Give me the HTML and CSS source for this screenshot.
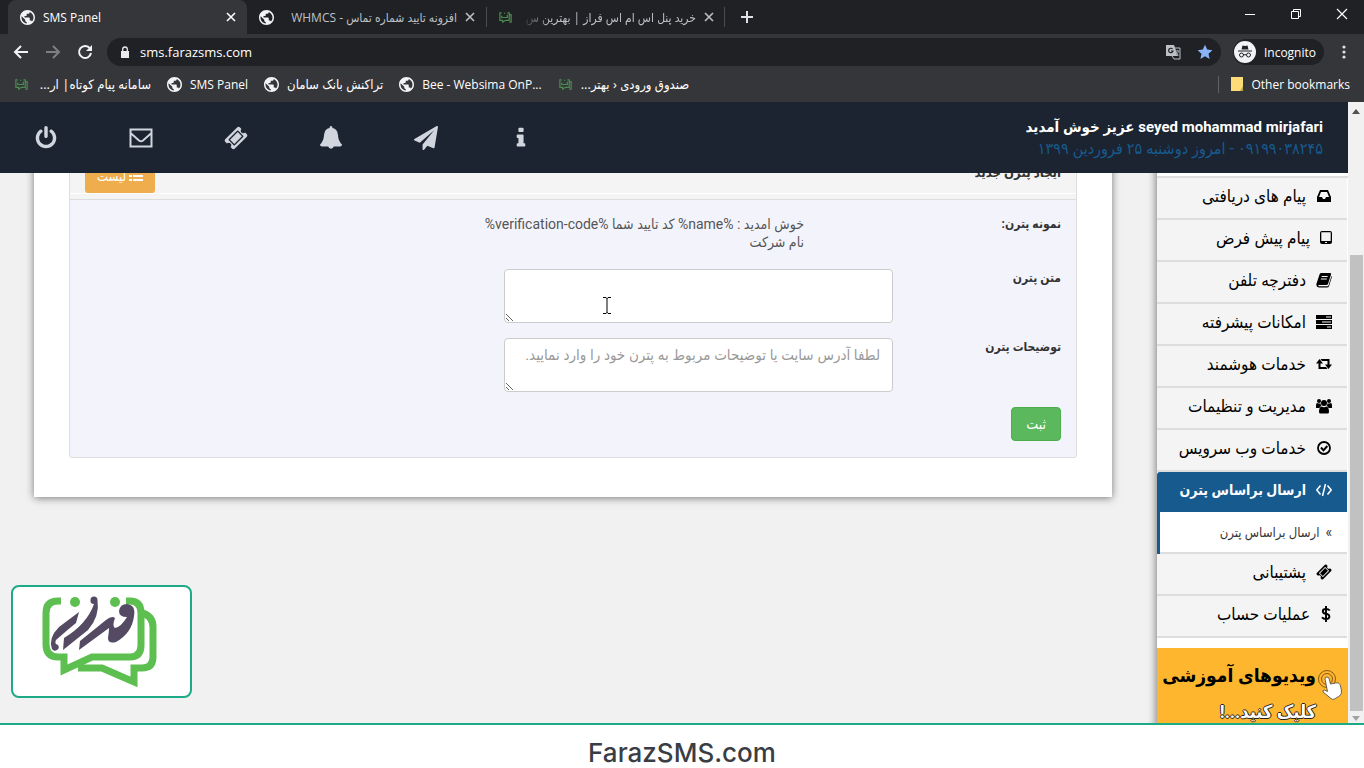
FILE: index.html
```html
<!DOCTYPE html>
<html lang="fa">
<head>
    <meta charset="utf-8">
    <title>SMS Panel</title>
    <link rel="stylesheet" href="styles.css">
</head>
<body>
    <!-- shared icons -->
    <svg class="defs">
        <symbol id="globe" viewBox="2 2 20 20">
            <path fill="#f1f3f4" d="M12 2C6.480 2 2 6.480 2 12s4.480 10 10 10 10-4.480 10-10S17.520 2 12 2zm-1 17.930c-3.950-.49-7-3.850-7-7.930 0-.62.080-1.210.210-1.790L9 15v1c0 1.100.900 2 2 2v1.930zm6.900-2.540c-.26-.81-1-1.390-1.900-1.390h-1v-3c0-.55-.45-1-1-1H8v-2h2c.550 0 1-.45 1-1V7h2c1.100 0 2-.9 2-2v-.41c2.930 1.190 5 4.060 5 7.410 0 2.080-.8 3.970-2.100 5.390z"/>
        </symbol>
        <symbol id="chat" viewBox="0 0 16 16">
            <path d="M4 3H2v8h3v2l3-2h4V3h-2M12 5h2v8h-2M4 6v2h6V5M7 3v1" fill="none" stroke="#4c8a50" stroke-width="1.300"/>
        </symbol>
        <symbol id="cross" viewBox="0 0 10 10">
            <path d="M1 1l8 8M9 1L1 9" fill="none" stroke="currentColor" stroke-width="1.600"/>
        </symbol>
        <symbol id="ticket" viewBox="0 0 1792 1792">
            <path fill="currentColor" d="M1024 452l316 316-572 572-316-316zm-211 979l618-618q19-19 19-45t-19-45l-362-362q-18-18-45-18t-45 18l-618 618q-19 19-19 45t19 45l362 362q18 18 45 18t45-18zm889-637l-907 908q-37 37-90.500 37t-90.500-37l-126-126q56-56 56-136t-56-136-136-56-136 56l-125-126q-37-37-37-90.500t37-90.500l907-906q37-37 90.500-37t90.500 37l125 125q-56 56-56 136t56 136 136 56 136-56l126 125q37 37 37 90.500t-37 90.500z"/>
        </symbol>
    </svg>

    <div class="tabs">
        <div class="tab active">
            <svg class="fav"><use href="#globe"/></svg>
            <span class="tab-title">SMS Panel</span>
            <button class="close" aria-label="Close"><svg><use href="#cross"/></svg></button>
        </div>
        <div class="tab">
            <svg class="fav"><use href="#globe"/></svg>
            <span class="tab-title" dir="rtl">افزونه تایید شماره تماس - WHMCS</span>
            <button class="close" aria-label="Close"><svg><use href="#cross"/></svg></button>
        </div>
        <div class="tab">
            <svg class="fav"><use href="#chat"/></svg>
            <span class="tab-title fade" dir="rtl">خرید پنل اس ام اس فراز | بهترین س</span>
            <button class="close" aria-label="Close"><svg><use href="#cross"/></svg></button>
        </div>
        <button class="new-tab" aria-label="New tab">
            <svg viewBox="0 0 14 14"><path d="M7 1v12M1 7h12" stroke="#dee1e6" stroke-width="2"/></svg>
        </button>
        <div class="win">
            <button aria-label="Minimize"><svg viewBox="0 0 12 12"><path d="M1 6.500h10" stroke="#fff"/></svg></button>
            <button aria-label="Restore"><svg viewBox="0 0 12 12"><path d="M1.500 3.500h7v7h-7zM3.500 3.500v-2h7v7h-2" fill="none" stroke="#fff"/></svg></button>
            <button aria-label="Close window"><svg viewBox="0 0 12 12"><path d="M1 1l10 10M11 1L1 11" stroke="#fff" stroke-width="1.200"/></svg></button>
        </div>
    </div>

    <div class="toolbar">
        <button aria-label="Back"><svg viewBox="0 0 16 16"><path d="M15 8H2M8 2L2 8l6 6" fill="none" stroke="#f1f3f4" stroke-width="2"/></svg></button>
        <button aria-label="Forward"><svg viewBox="0 0 16 16"><path d="M1 8h13M8 2l6 6-6 6" fill="none" stroke="#7d7f83" stroke-width="2"/></svg></button>
        <button aria-label="Reload"><svg viewBox="0 0 16 16"><path d="M13 4.500A6 6 0 1 0 14 9" fill="none" stroke="#f1f3f4" stroke-width="2"/><path d="M15 1v6H9z" fill="#f1f3f4"/></svg></button>
        <div class="address">
            <svg class="lock" viewBox="0 0 10 12"><path d="M1 5h8v7H1z" fill="#e8eaed"/><path d="M2.700 5V3.300a2.300 2.300 0 0 1 4.600 0V5" fill="none" stroke="#e8eaed" stroke-width="1.300"/></svg>
            <input type="text" value="sms.farazsms.com" aria-label="Address">
            <svg class="translate" viewBox="0 0 16 16">
                <path d="M1 1h8l4 11H1z" fill="#bdc1c6"/><path d="M9 4h6v11H9l-2-3" fill="none" stroke="#bdc1c6"/>
                <path d="M7.500 5a2.200 2.200 0 1 0 .5 2H6" fill="none" stroke="#202124" stroke-width="1.200"/>
                <path d="M10.500 7h4M12.500 6v1M13.500 7q-.5 3-2.500 4M11.500 9l2 2.500" fill="none" stroke="#9aa0a6"/>
            </svg>
            <svg class="star" viewBox="0 0 16 16"><path d="M8 .8l2.200 4.800 5.200.6-3.900 3.500 1.100 5.200L8 12.200l-4.600 2.700 1.100-5.200L.6 6.200l5.200-.6z" fill="#8ab4f8"/></svg>
        </div>
        <div class="incognito">
            <svg viewBox="0 0 22 22"><circle cx="11" cy="11" r="11" fill="#f1f3f4"/><path d="M7.500 8.500l1-4 2.500.6 2.500-.6 1 4z" fill="#202124"/><path d="M4 10h14M9.500 14q1.500-.8 3 0" stroke="#202124" fill="none"/><circle cx="7.500" cy="14" r="2" fill="none" stroke="#202124"/><circle cx="14.500" cy="14" r="2" fill="none" stroke="#202124"/></svg>
            <span>Incognito</span>
        </div>
        <button class="dots" aria-label="Menu"><svg viewBox="0 0 4 16"><circle cx="2" cy="3" r="1.600" fill="#dee1e6"/><circle cx="2" cy="8" r="1.600" fill="#dee1e6"/><circle cx="2" cy="13" r="1.600" fill="#dee1e6"/></svg></button>
    </div>

    <nav class="bookmarks">
        <a href="#" class="first"><svg class="fav"><use href="#chat"/></svg><span dir="rtl">سامانه پیام کوتاه| ار...</span></a>
        <a href="#"><svg class="fav"><use href="#globe"/></svg><span>SMS Panel</span></a>
        <a href="#"><svg class="fav"><use href="#globe"/></svg><span dir="rtl">تراکنش بانک سامان</span></a>
        <a href="#"><svg class="fav"><use href="#globe"/></svg><span>Bee - Websima OnP...</span></a>
        <a href="#"><svg class="fav"><use href="#chat"/></svg><span dir="rtl">صندوق ورودی ‹ بهتر...</span></a>
        <a href="#" class="other"><svg class="folder" viewBox="0 0 12 14"><path d="M0 0h12v14H0z" fill="#fddc77"/><path d="M12 9v5h-3z" fill="#c9a64a"/></svg><span>Other bookmarks</span></a>
    </nav>

    <div class="view">
        <div class="site" dir="rtl">
            <header>
                <div class="welcome">
                    <strong><bdi>seyed mohammad mirjafari</bdi> عزیز خوش آمدید</strong>
                    <span>۰۹۱۹۹۰۳۸۲۴۵ - امروز دوشنبه ۲۵ فروردین ۱۳۹۹</span>
                </div>
                <nav class="icons" dir="ltr">
                    <a href="#" aria-label="Log out"><svg viewBox="0 0 1792 1792"><path d="M1664 896q0 156-61 298t-164 245-245 164-298 61-298-61-245-164-164-245-61-298q0-182 80.500-343t226.500-270q43-32 95.500-25t83.500 50q32 42 24.500 94.500t-49.500 84.500q-98 74-151.500 181t-53.500 228q0 104 40.500 198.500t109.500 163.500 163.500 109.500 198.500 40.500 198.500-40.500 163.500-109.500 109.500-163.500 40.500-198.500q0-121-53.500-228t-151.500-181q-42-32-49.500-84.500t24.500-94.500q31-43 84-50t95 25q146 109 226.500 270t80.500 343zm-640-768v640q0 52-38 90t-90 38-90-38-38-90v-640q0-52 38-90t90-38 90 38 38 90z"/></svg></a>
                    <a href="#" aria-label="Messages"><svg viewBox="0 0 24 24"><path d="M1.500 3.500h21v17h-21zM1.500 7l8.500 7.500q2 1.400 4 0L22.500 7" fill="none" stroke="#d0d5de" stroke-width="2"/></svg></a>
                    <a href="#" aria-label="Tickets"><svg><use href="#ticket"/></svg></a>
                    <a href="#" aria-label="Alerts"><svg viewBox="0 0 24 24"><path d="M12 0q1.500 0 1.500 2 5 1 5.500 7 .2 6 4 9.500 0 2-2 2h-6.200a2.900 2.900 0 0 1-5.600 0H3q-2 0-2-2Q4.800 15 5 9q.5-6 5.500-7 0-2 1.500-2z"/></svg></a>
                    <a href="#" aria-label="Send"><svg viewBox="0 0 1792 1792"><path d="M1764 11q33 24 27 64l-256 1536q-5 29-32 45-14 8-31 8-11 0-24-5l-453-185-242 295q-18 23-49 23-13 0-22-4-19-7-30.500-23.500t-11.500-36.500v-349l864-1059-1069 925-395-162q-37-14-40-55-2-40 32-59l1664-960q15-9 32-9 20 0 36 11z"/></svg></a>
                    <a href="#" aria-label="Info"><svg viewBox="0 0 1792 1792"><path d="M1216 1344v128q0 26-19 45t-45 19h-512q-26 0-45-19t-19-45v-128q0-26 19-45t45-19h64v-384h-64q-26 0-45-19t-19-45v-128q0-26 19-45t45-19h384q26 0 45 19t19 45v576h64q26 0 45 19t19 45zm-128-1152v192q0 26-19 45t-45 19h-256q-26 0-45-19t-19-45v-192q0-26 19-45t45-19h256q26 0 45 19t19 45z"/></svg></a>
                </nav>
            </header>

            <div class="content">
                <aside class="sidebar">
                    <ul>
                        <li><a href="#"><svg viewBox="0 0 16 16"><path d="M4 2h8l3 7v5H1V9zM3 9h3l1 2h2l1-2h3l-2-5H5z" fill-rule="evenodd"/></svg>پیام های دریافتی</a></li>
                        <li><a href="#"><svg class="narrow" viewBox="0 0 12 16"><path d="M2 1h8q2 0 2 2v9q0 2-2 2H2q-2 0-2-2V3q0-2 2-2zM1.300 2.300v8.700h9.400V2.300zM5 12h2v1H5z" fill-rule="evenodd"/></svg>پیام پیش فرض</a></li>
                        <li><a href="#"><svg viewBox="0 0 16 16"><path d="M5 1h9q1.500 0 1 1.500L12 12q-.4 1-1.500 1H2.500q-.5 1 .5 1.200h8.500q.8 0 1.100-1L15.500 4q.6.500.3 1.300L13 14.200Q12.600 15.500 11 15.500H3Q0 15 .4 12L3.500 2.500Q4 1 5 1zM5.800 4l-.3 1h6l.3-1zM5 6.500l-.3 1h6l.3-1z" fill-rule="evenodd"/></svg>دفترچه تلفن</a></li>
                        <li><a href="#"><svg viewBox="0 0 16 16"><path d="M0 1h16v4H0zM0 6h16v4H0zM0 11h16v4H0zM10 2.500v1h5v-1zM6 7.500v1h9v-1zM11 12.500v1h4v-1z" fill-rule="evenodd"/></svg>امکانات پیشرفته</a></li>
                        <li><a href="#"><svg viewBox="0 0 16 16"><path d="M3.500 3L7 7.500H4.500V11H10l1.500 2h-9V7.500H0zM4.500 3h9v5.500H16L12.500 13 9 8.500h2.500V5H6z"/></svg>خدمات هوشمند</a></li>
                        <li><a href="#"><svg viewBox="0 0 16 16"><circle cx="3" cy="3" r="2"/><circle cx="13" cy="3" r="2"/><circle cx="8" cy="5" r="3"/><path d="M0 10V7q0-2 1.500-2Q3 6 4.500 5.200 4.500 7 5.500 8 4 8 3.500 10zM16 10V7q0-2-1.500-2-1.500 1-3 .2Q11.500 7 10.500 8q1.500 0 2 2zM3 14q0-5 2.500-5.500Q8 10 10.500 8.500 13 9 13 14q0 1.500-1.500 1.500h-7Q3 15.500 3 14z"/></svg>مدیریت و تنظیمات</a></li>
                        <li><a href="#"><svg viewBox="0 0 16 16"><circle cx="8" cy="8" r="6" fill="none" stroke="#000" stroke-width="1.800"/><path d="M5 7.500l2.500 2.800L11.300 6" fill="none" stroke="#000" stroke-width="2"/></svg>خدمات وب سرویس</a></li>
                        <li class="open">
                            <a href="#"><svg viewBox="0 0 16 16"><path d="M4.500 3.500L.8 8l3.700 4.500M11.500 3.500L15.200 8l-3.700 4.500M9.500 2l-3 12" fill="none" stroke="#fff" stroke-width="1.500"/></svg>ارسال براساس پترن</a>
                            <a href="#" class="sub"><i>»</i>ارسال براساس پترن</a>
                        </li>
                        <li><a href="#"><svg><use href="#ticket"/></svg>پشتیبانی</a></li>
                        <li><a href="#"><svg class="narrow" viewBox="0 0 12 16"><path d="M9.800 4.500Q8.500 3 6 3 2.800 3 2.800 5.200T6 7.800t3.400 2.700Q9.400 13 6 13q-2.700 0-4-1.800M6 0v16" fill="none" stroke="#000" stroke-width="1.900"/></svg>عملیات حساب</a></li>
                    </ul>
                    <a href="#" class="banner">
                        <svg viewBox="0 0 26 34">
                            <circle cx="9" cy="12" r="8.500" fill="none" stroke="#8a5a10"/><circle cx="9" cy="12" r="5.500" fill="none" stroke="#8a5a10"/>
                            <path d="M7 12q0-2 2-2t2.200 2l1.300 5 5-1q4-1 5 3l1 5q.5 3-2 5l-5 3q-2 1-3.500-.5L5 25q-.5-2 1.500-2l3 1.500z" fill="#fff" stroke="#444" stroke-width=".8"/>
                        </svg>
                        <span class="banner-text"><b>ویدیوهای آموزشی</b><em>کلیک کنید...!</em></span>
                    </a>
                </aside>

                <main class="card">
                    <section class="panel">
                        <div class="panel-heading">
                            <h1>ایجاد پترن جدید</h1>
                            <button class="btn-list"><svg viewBox="0 0 14 12"><path d="M0 1h3v2H0zM4 1h10v2H4zM0 5h3v2H0zM4 5h10v2H4zM0 9h3v2H0zM4 9h10v2H4z"/></svg>لیست</button>
                        </div>
                        <form class="panel-body">
                            <div class="row">
                                <span class="label">نمونه پترن:</span>
                                <p class="sample">خوش امدید : <bdi>%name%</bdi> کد تایید شما <bdi>%verification-code%</bdi><br>نام شرکت</p>
                            </div>
                            <div class="row">
                                <label class="label" for="pattern">متن پترن</label>
                                <div class="field">
                                    <textarea id="pattern"></textarea>
                                    <svg class="ibeam" viewBox="0 0 8 17"><path d="M0 .5h3l1 1 1-1h3M4 1v15M0 16.500h3l1-1 1 1h3" fill="none" stroke="#000"/></svg>
                                </div>
                            </div>
                            <div class="row">
                                <label class="label" for="desc">توضیحات پترن</label>
                                <div class="field">
                                    <textarea id="desc" placeholder="لطفا آدرس سایت یا توضیحات مربوط به پترن خود را وارد نمایید."></textarea>
                                </div>
                            </div>
                            <button type="button" class="btn-save">ثبت</button>
                        </form>
                    </section>
                </main>
            </div>
        </div>

        <div class="scrollbar">
            <svg viewBox="0 0 8 5"><path d="M0 5l4-5 4 5z" fill="#505050"/></svg>
            <div class="track"><div class="thumb"></div></div>
            <svg viewBox="0 0 8 5"><path d="M0 0l4 5 4-5z" fill="#a3a3a3"/></svg>
        </div>

        <div class="logo">
            <svg viewBox="0 0 116 94">
                <g fill="none" stroke="#5cbf50" stroke-width="7">
                    <path d="M19 5h-3Q4 5 4 17v31q0 13 12 13h6v13l28-13h38q11 0 11-12V17Q99 5 88 5h-4"/>
                    <path d="M100 17q11 3 11 14v30q0 11-11 11h-8v14L60 72H36"/>
                </g>
                <circle cx="33" cy="6" r="5" fill="#5cbf50"/><circle cx="73" cy="6" r="5" fill="#5cbf50"/>
                <g fill="#544a63">
                    <path d="M37 16L34 27Q24 35 14 44q-2 4 2 5a3.500 3.500 0 1 1-6 4Q6 42 17 31z"/>
                    <path d="M22 42Q45 28 52 8q-4 0-3.500-4a3.500 3.500 0 0 1 7 0Q58 20 46 34L21 54z"/>
                    <path d="M38 45L64 24q6-5 9-2-3 8 0 10 6-1 12-11-8 0-8-6 1-7 8-7 9 1 7 12-2 17-18 26-8 2-8-4 1-7 1-10L37 54z"/>
                </g>
            </svg>
        </div>
    </div>

    <footer>FarazSMS.com</footer>
</body>
</html>
```
FILE: styles.css
```css
* {
    box-sizing: border-box;
}
body {
    margin: 0;
    height: 100vh;
    display: flex;
    flex-direction: column;
    overflow: hidden;
    background: #fff;
    font-family: Roboto, "DejaVu Sans Condensed", "DejaVu Sans", sans-serif;
}
a {
    text-decoration: none;
    color: inherit;
}
button {
    border: 0;
    padding: 0;
    background: none;
    font-family: inherit;
    color: inherit;
}
svg {
    display: block;
    flex: none;
}
.defs {
    position: absolute;
    width: 0;
    height: 0;
}

/* browser window */
.tabs,
.toolbar,
.bookmarks {
    display: flex;
    align-items: center;
    flex: none;
    font-family: "Open Sans", "DejaVu Sans Condensed", "DejaVu Sans", sans-serif;
    font-size: 12px;
    color: #fff;
    background: #35363a;
}
.tabs {
    height: 34px;
    padding-left: 8px;
    background: #202124;
}
.tab {
    width: 239px;
    height: 34px;
    display: flex;
    align-items: center;
    gap: 8px;
    padding: 0 11px 0 12px;
    color: #bdc1c6;
}
.tab.active {
    background: #35363a;
    border-radius: 8px 8px 0 0;
    color: #fff;
}
.tab + .tab + .tab {
    background: linear-gradient(#4a4c50, #4a4c50) left center / 1px 20px no-repeat, linear-gradient(#4a4c50, #4a4c50) right center / 1px 20px no-repeat;
}
.fav {
    width: 15px;
    height: 15px;
}
.tab-title {
    flex: 1;
    min-width: 0;
    overflow: hidden;
    white-space: nowrap;
}
.fade {
    -webkit-mask-image: linear-gradient(to right, transparent, #000 30px);
    mask-image: linear-gradient(to right, transparent, #000 30px);
}
.close svg {
    width: 10px;
    height: 10px;
}
.new-tab svg {
    width: 14px;
    height: 14px;
}
.new-tab {
    margin-left: 15px;
}
.win {
    margin-left: auto;
    display: flex;
    gap: 34px;
    padding: 0 16px 6px 0;
}
.win svg {
    width: 12px;
    height: 12px;
}
.toolbar {
    height: 36px;
    padding: 0 18px 0 13px;
    gap: 16px;
}
.toolbar button svg {
    width: 16px;
    height: 16px;
}
.address {
    flex: 1;
    height: 28px;
    margin-left: -2px;
    padding: 0 8px 0 13px;
    display: flex;
    align-items: center;
    gap: 10px;
    border-radius: 14px;
    background: #202124;
}
.address input {
    flex: 1;
    border: 0;
    padding: 0;
    outline: 0;
    background: none;
    color: #fff;
    font: 13px "Open Sans", sans-serif;
}
.lock {
    width: 10px;
    height: 12px;
}
.translate,
.star {
    width: 16px;
    height: 16px;
}
.star {
    margin-left: 6px;
}
.incognito {
    height: 26px;
    margin: 0 2px 0 -4px;
    padding: 0 8px 0 1px;
    display: flex;
    align-items: center;
    gap: 8px;
    border-radius: 13px;
    background: #202124;
}
.incognito svg {
    width: 22px;
    height: 22px;
}
.toolbar .dots svg {
    width: 4px;
}
.bookmarks {
    height: 32px;
    padding: 0 14px 4px;
    gap: 16px;
}
.bookmarks a {
    display: flex;
    align-items: center;
    gap: 8px;
    white-space: nowrap;
}
.bookmarks span[dir="rtl"] {
    font-size: 13px;
}
.bookmarks .first {
    width: 137px;
    justify-content: space-between;
}
.bookmarks .other {
    margin-left: auto;
    padding-left: 12px;
    border-left: 1px solid #5f6368;
}
.folder {
    width: 12px;
    height: 14px;
}

/* page */
.view {
    position: relative;
    flex: 1;
    min-height: 0;
    display: flex;
    border-bottom: 2px solid #1dab87;
}
.site {
    flex: 1;
    min-width: 0;
    overflow: hidden;
    background: #f1f1f1;
}
header {
    position: relative;
    z-index: 2;
    height: 71px;
    padding: 1px 25px 0 34px;
    display: flex;
    justify-content: space-between;
    align-items: center;
    background: #1b2430;
}
.welcome {
    display: flex;
    flex-direction: column;
    font-size: 15px;
    line-height: 21px;
    color: #fff;
}
.welcome span {
    font-size: 16px;
    color: #175a8e;
}
.icons {
    display: flex;
    gap: 71px;
}
.icons svg {
    width: 24px;
    height: 24px;
    fill: #d0d5de;
    color: #d0d5de;
}
.content {
    display: flex;
    align-items: flex-start;
    gap: 45px;
    margin-top: -60px;
}
.sidebar {
    width: 191px;
    padding-top: 63px;
    background: #fff;
    box-shadow: -2px 0 7px rgba(0, 0, 0, 0.4);
}
.sidebar ul {
    list-style: none;
    margin: 0 0 10px;
    padding: 0 1px 0 0;
    border-top: 2px solid #ddd;
}
.sidebar li a {
    height: 42px;
    display: flex;
    align-items: center;
    gap: 10px;
    padding: 0 15px 4px;
    border-bottom: 2px solid #ddd;
    background: #f4f4f4;
    font-size: 17px;
    white-space: nowrap;
    color: #000;
}
.sidebar li svg {
    width: 16px;
    height: 16px;
}
.sidebar li .narrow {
    width: 12px;
}
.sidebar .open {
    border-left: 3px solid #175a8e;
    border-radius: 3px 3px 0 0;
}
.sidebar .open a {
    height: 40px;
    border-bottom: 0;
    background: #175a8e;
    font-size: 14px;
    font-weight: bold;
    color: #fff;
}
.sidebar .open .sub {
    height: 42px;
    gap: 6px;
    padding-bottom: 0;
    border-bottom: 2px solid #ddd;
    background: #fff;
    font-size: 13px;
    font-weight: normal;
    color: #333;
}
.sub i {
    font-style: normal;
    font-size: 14px;
}
.banner {
    display: flex;
    gap: 2px;
    height: 110px;
    padding: 10px 4px;
    background: #ffb62f;
}
.banner svg {
    width: 26px;
    height: 34px;
    margin-top: 9px;
}
.banner-text {
    font-size: 19px;
    line-height: 36px;
    white-space: nowrap;
    color: #000;
}
.banner-text b,
.banner-text em {
    display: block;
}
.banner-text em {
    font-style: normal;
    font-weight: bold;
    font-size: 18px;
    color: #fff;
    text-shadow: 1px 0 #222, -1px 0 #222, 0 1px #222, 0 -1px #222;
}
.card {
    flex: 1;
    min-width: 0;
    margin-left: 34px;
    padding: 35px 35px 39px;
    background: #fff;
    box-shadow: 0 1px 8px rgba(0, 0, 0, 0.5);
}
.panel {
    border: 1px solid #ddd;
    border-radius: 3px;
    background: #f3f4fb;
}
.panel-heading {
    display: flex;
    justify-content: space-between;
    align-items: center;
    padding: 10px 15px 6px;
    border-bottom: 1px solid #ddd;
    background: #f4f4f4;
    box-shadow: inset 0 -5px #f4f4f4, inset 0 -6px #fff;
}
.panel-heading h1 {
    margin: 0 0 8px;
    font-size: 13px;
    color: #333;
}
.btn-list {
    height: 34px;
    padding: 0 12px;
    display: flex;
    align-items: center;
    gap: 3px;
    border-radius: 3px;
    background: #f0ad4e;
    font-size: 13px;
    color: #fff;
}
.btn-list svg {
    width: 14px;
    height: 12px;
    fill: #fff;
}
.panel-body {
    display: flex;
    flex-direction: column;
    align-items: flex-start;
    gap: 15px;
    padding: 15px 15px 16px;
}
.row {
    width: 100%;
    display: grid;
    grid-template-columns: 153fr minmax(0, 404fr) 419fr;
    font-size: 14px;
    line-height: 18px;
}
.label {
    font-size: 12px;
    font-weight: bold;
    color: #333;
}
.sample {
    margin: 0 104px 3px 0;
    white-space: nowrap;
    color: #555;
}
.field {
    position: relative;
    padding-right: 15px;
}
textarea {
    display: block;
    width: 100%;
    height: 54px;
    padding: 6px 12px;
    border: 1px solid #ccc;
    border-radius: 4px;
    background: #fff;
    font-family: inherit;
    font-size: 15px;
    line-height: 20px;
}
textarea::placeholder {
    color: #999;
}
.ibeam {
    position: absolute;
    left: 99px;
    top: 28px;
    width: 8px;
    height: 17px;
}
.btn-save {
    height: 34px;
    padding: 0 14px;
    border: 1px solid #4cae4c;
    border-radius: 4px;
    background: #5cb85c;
    font-size: 14px;
    color: #fff;
}

.scrollbar {
    width: 16px;
    display: flex;
    flex-direction: column;
    align-items: center;
    padding: 7px 0 2px;
    background: #f1f1f1;
}
.scrollbar svg {
    width: 8px;
    height: 5px;
}
.track {
    flex: 1;
    width: 13px;
    margin: 5px 0;
    display: flex;
    align-items: flex-end;
}
.thumb {
    width: 100%;
    height: 77%;
    background: #c1c1c1;
}
.logo {
    position: absolute;
    left: 11px;
    bottom: 25px;
    width: 181px;
    height: 113px;
    padding: 9px 29px;
    border: 2px solid #1dab87;
    border-radius: 8px;
    background: #fff;
}
.logo svg {
    width: 116px;
    height: 94px;
}
footer {
    flex: none;
    padding: 14px 0 1px;
    text-align: center;
    font-family: Inter, sans-serif;
    font-size: 26px;
    font-weight: 500;
    line-height: 28px;
    color: #3a3d44;
}
```
